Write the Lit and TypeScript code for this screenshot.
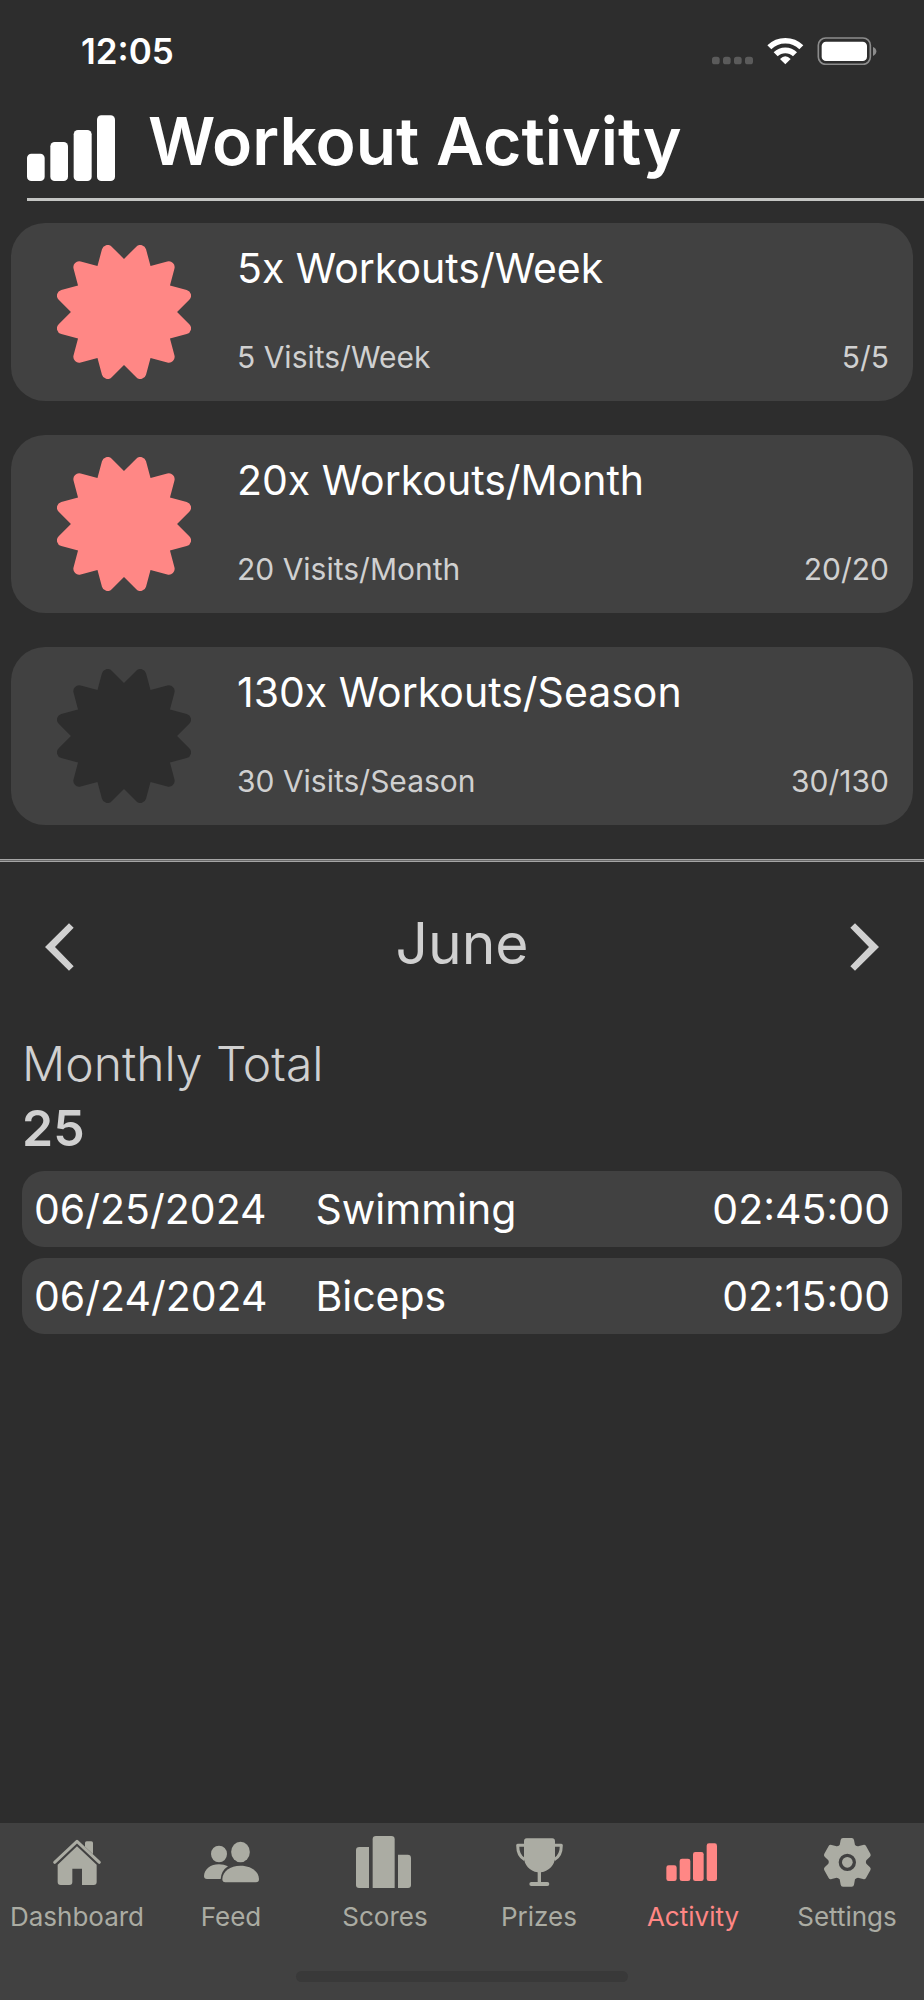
import { LitElement, html, css, svg } from "lit";
import { customElement, property, state } from "lit/decorators.js";
import { classMap } from "lit/directives/class-map.js";

/** Twelve-pointed badge outline with rounded tips, centred on the origin. */
function badgePath(): string {
  const points = 12;
  const inner = 160;
  const outer = 226;
  const corner = 17.5;
  const cut = 30.3;
  const at = (r: number, deg: number): [number, number] => {
    const a = (deg * Math.PI) / 180;
    return [r * Math.sin(a), -r * Math.cos(a)];
  };
  const toward = (from: [number, number], to: [number, number]) => {
    const d = Math.hypot(to[0] - from[0], to[1] - from[1]);
    const x = from[0] + ((to[0] - from[0]) * cut) / d;
    const y = from[1] + ((to[1] - from[1]) * cut) / d;
    return `${x.toFixed(1)} ${y.toFixed(1)}`;
  };
  let d = "";
  for (let i = 0; i < points; i++) {
    const a = at(inner, i * 30);
    const tip = at(outer, i * 30 + 15);
    const b = at(inner, i * 30 + 30);
    d += `${i ? "L" : "M"}${a[0].toFixed(1)} ${a[1].toFixed(1)}`;
    d += `L${toward(tip, a)}A${corner} ${corner} 0 0 1 ${toward(tip, b)}`;
  }
  return d + "Z";
}

const BADGE = badgePath();

@customElement("goal-card")
class GoalCard extends LitElement {
  @property() heading = "";
  @property() detail = "";
  @property({ type: Number }) done = 0;
  @property({ type: Number }) goal = 1;

  static styles = css`
    :host {
      display: flex;
      align-items: center;
      gap: 46px;
      padding: 0 24px 0 46px;
      border-radius: 34px;
      background: #414141;
    }
    .badge {
      flex: none;
      width: 134px;
      height: 134px;
      margin: 22px 0;
      fill: #2d2d2d;
    }
    .earned {
      fill: #ff8785;
    }
    .body {
      flex: 1;
      align-self: stretch;
      display: flex;
      flex-direction: column;
      justify-content: space-between;
      padding: 17px 0 24px;
    }
    h2 {
      margin: 0;
      font-size: 41px;
      line-height: 56px;
      font-weight: 400;
      color: #fff;
    }
    .row {
      display: flex;
      justify-content: space-between;
      font-size: 30px;
      line-height: 40px;
      color: #d0d0d0;
    }
  `;

  render() {
    return html`
      <svg
        class=${classMap({ badge: true, earned: this.done >= this.goal })}
        viewBox="-202 -202 404 404"
        aria-hidden="true"
      >
        <path d=${BADGE} />
      </svg>
      <div class="body">
        <h2>${this.heading}</h2>
        <div class="row">
          <span>${this.detail}</span>
          <span>${this.done}/${this.goal}</span>
        </div>
      </div>
    `;
  }
}

const TABS = [
  {
    label: "Dashboard",
    box: "132 69 198 174",
    icon: svg`
      <path d="M164 157L231 94L298 157" fill="none" stroke="currentColor" stroke-width="9" stroke-linecap="round" stroke-linejoin="round"/>
      <path d="M255 106V99Q255 94 260 94H274Q279 94 279 99V133L255 110Z"/>
      <path d="M231 109L290 164V216Q290 225 281 225H246V176H217V216Q217 225 208 225H182Q173 225 173 216V164Z"/>`,
  },
  {
    label: "Feed",
    box: "594 69 198 174",
    icon: svg`
      <ellipse cx="657" cy="132" rx="24" ry="25"/>
      <ellipse cx="721.500" cy="126" rx="28" ry="31"/>
      <path d="M657 163Q672 163 684 169Q664 182 662 207H621Q612 207 612 198C613 177 632 163 657 163Z"/>
      <path d="M721.500 167C753 167 776 184 777 207Q777 217 768 217H676Q667 217 667 207C668 184 690 167 721.500 167Z"/>`,
  },
  {
    label: "Scores",
    box: "1056 69 198 174",
    icon: svg`
      <path d="M1107 111V234H1077Q1068 234 1068 225V121Q1068 111 1078 111Z"/>
      <path d="M1118 234V88Q1118 78 1128 78H1174Q1184 78 1184 88V234Z"/>
      <path d="M1194 134H1223Q1233 134 1233 144V225Q1233 234 1224 234H1194Z"/>`,
  },
  {
    label: "Prizes",
    box: "132 69 198 174",
    icon: svg`
      <path d="M194 85H271Q279 85 279 94V142C279 165 261 184 237 187V216H256Q262 216 262 222Q262 228 256 228H208Q202 228 202 222Q202 216 208 216H227V187C203 184 186 165 186 142V94Q186 85 194 85Z"/>
      <path d="M188 106H167C167 128 174 142 188 149M277 106H298C298 128 291 142 277 149" fill="none" stroke="currentColor" stroke-width="9" stroke-linejoin="round"/>`,
  },
  {
    label: "Activity",
    box: "594 69 198 174",
    icon: svg`
      <rect x="613" y="166" width="31" height="47" rx="7"/>
      <rect x="653" y="146" width="32" height="67" rx="7"/>
      <rect x="693" y="126" width="32" height="87" rx="7"/>
      <rect x="734" y="100" width="31" height="113" rx="7"/>`,
  },
  {
    label: "Settings",
    box: "1056 69 198 174",
    icon: svg`
      <path fill-rule="evenodd" d="M1143 84H1169Q1175 84 1176 90L1179 105Q1185 110 1191 108L1203 105Q1209 103 1212 108L1225 131Q1228 136 1224 140L1213 151Q1210 156 1213 161L1224 172Q1228 176 1225 181L1212 204Q1209 209 1203 207L1191 204Q1185 202 1179 208L1176 224Q1175 230 1169 230H1143Q1137 230 1136 224L1133 208Q1127 202 1121 204L1109 207Q1103 209 1100 204L1087 181Q1084 176 1088 172L1099 161Q1102 156 1099 151L1088 140Q1084 136 1087 131L1100 108Q1103 103 1109 105L1121 108Q1127 110 1133 105L1136 90Q1137 84 1143 84ZM1156 131A26 26 0 1 0 1156 183A26 26 0 1 0 1156 131Z"/>
      <circle cx="1156" cy="157" r="16"/>`,
  },
];

@customElement("tab-bar")
class TabBar extends LitElement {
  @property() active = "Activity";

  static styles = css`
    :host {
      display: block;
      background: #414141;
    }
    nav {
      display: grid;
      grid-template-columns: repeat(6, minmax(0, 1fr));
      padding-top: 10px;
    }
    a {
      display: flex;
      flex-direction: column;
      align-items: center;
      gap: 8px;
      color: #abaca3;
      text-decoration: none;
      font-size: 26px;
      line-height: 36px;
    }
    .active {
      color: #ff8785;
    }
    svg {
      width: 66px;
      height: 58px;
      fill: currentColor;
    }
    .home-indicator {
      width: 36%;
      height: 11px;
      margin: 36px auto 0;
      border-radius: 6px;
      background: #393939;
    }
    .foot {
      padding-bottom: 18px;
    }
  `;

  render() {
    return html`
      <nav aria-label="Main">
        ${TABS.map(
          (tab) => html`
            <a
              href="#${tab.label.toLowerCase()}"
              class=${classMap({ active: tab.label === this.active })}
            >
              <svg viewBox=${tab.box} aria-hidden="true">${tab.icon}</svg>
              <span>${tab.label}</span>
            </a>
          `
        )}
      </nav>
      <div class="foot"><div class="home-indicator"></div></div>
    `;
  }
}

const MONTHS = [
  "January", "February", "March", "April", "May", "June",
  "July", "August", "September", "October", "November", "December",
];

const GOALS = [
  { heading: "5x Workouts/Week", detail: "5 Visits/Week", done: 5, goal: 5 },
  { heading: "20x Workouts/Month", detail: "20 Visits/Month", done: 20, goal: 20 },
  { heading: "130x Workouts/Season", detail: "30 Visits/Season", done: 30, goal: 130 },
];

const LOG = [
  { date: "06/25/2024", name: "Swimming", time: "02:45:00" },
  { date: "06/24/2024", name: "Biceps", time: "02:15:00" },
];

@customElement("app-root")
class AppRoot extends LitElement {
  @state() private month = 5;

  static styles = css`
    :host {
      display: flex;
      flex-direction: column;
      min-height: 100vh;
      background: #2d2d2d;
      color: #d0d0d0;
      font-family: Inter, "Liberation Sans", sans-serif;
    }
    .status {
      display: flex;
      align-items: center;
      justify-content: space-between;
      height: 101px;
      padding: 0 47px 0 81px;
      color: #fff;
      font-size: 35px;
      font-weight: 600;
    }
    .status svg {
      width: 165px;
      height: 28px;
    }
    .title {
      display: flex;
      align-items: flex-end;
      gap: 33px;
      margin-left: 27px;
      padding-bottom: 17px;
      border-bottom: 3px solid #c4c5c3;
      color: #fff;
    }
    .title svg {
      flex: none;
      width: 88px;
      height: 66px;
      fill: #fff;
    }
    h1 {
      margin: 0;
      font-size: 66px;
      line-height: 80px;
      font-weight: 600;
    }
    .goals {
      display: flex;
      flex-direction: column;
      gap: 34px;
      padding: 22px 11px 34px;
    }
    .divider {
      height: 1px;
      margin: 0;
      border: solid #a5a5a5;
      border-width: 1px 0;
      background: #6a6a6a;
    }
    .month {
      display: flex;
      align-items: center;
      justify-content: space-between;
      height: 170px;
      padding: 0 45px;
    }
    .month h2 {
      margin: 0;
      padding-bottom: 6px;
      font-size: 57px;
      line-height: 72px;
      font-weight: 400;
    }
    button {
      display: flex;
      padding: 0;
      border: 0;
      background: none;
      color: inherit;
      cursor: pointer;
    }
    button svg {
      width: 29px;
      height: 48px;
      fill: currentColor;
    }
    .log {
      padding: 0 22px;
    }
    .total {
      margin: 0;
      font-size: 48px;
      line-height: 64px;
      font-weight: 300;
    }
    .count {
      font-size: 50px;
      font-weight: 600;
    }
    table {
      width: 100%;
      border-spacing: 0 11px;
      color: #fff;
      font-size: 41px;
      line-height: 56px;
    }
    td {
      padding: 10px 12px;
      background: #414141;
    }
    .date {
      width: 1px;
      padding-right: 24px;
      border-radius: 22px 0 0 22px;
      white-space: nowrap;
    }
    .name {
      padding-left: 24px;
    }
    .time {
      border-radius: 0 22px 22px 0;
      text-align: right;
    }
    tab-bar {
      margin-top: auto;
    }
  `;

  private shift(step: number) {
    this.month = (this.month + step + 12) % 12;
  }

  render() {
    return html`
      <div class="status">
        <span>12:05</span>
        <svg viewBox="750 108 495 84" aria-hidden="true">
          <g fill="#5b5b5b">
            <rect x="750" y="167" width="23" height="23" rx="8" />
            <rect x="783" y="167" width="23" height="23" rx="8" />
            <rect x="816" y="167" width="23" height="23" rx="8" />
            <rect x="849" y="167" width="24" height="23" rx="8" />
          </g>
          <g fill="none" stroke="#fff">
            <path d="M922 139A68.500 68.500 0 0 1 1018 139" stroke-width="17" />
            <path d="M941 160A41 41 0 0 1 999 160" stroke-width="17" />
          </g>
          <path d="M954 174Q970 158 986 174L970 190Z" fill="#fff" />
          <rect x="1069" y="111" width="156" height="79" rx="22" fill="none" stroke="#8c8c8c" stroke-width="5" />
          <rect x="1079" y="122" width="136" height="58" rx="13" fill="#fff" />
          <path d="M1233 138Q1243 142 1243 151Q1243 160 1233 165Z" fill="#8c8c8c" />
        </svg>
      </div>

      <header class="title">
        <svg viewBox="81 345 264 198" aria-hidden="true">
          <rect x="81" y="461" width="53" height="82" rx="13" />
          <rect x="151" y="426" width="53" height="117" rx="13" />
          <rect x="221" y="390" width="54" height="153" rx="13" />
          <rect x="291" y="346" width="54" height="197" rx="13" />
        </svg>
        <h1>Workout Activity</h1>
      </header>

      <section class="goals" aria-label="Goals">
        ${GOALS.map(
          (g) => html`
            <goal-card
              .heading=${g.heading}
              .detail=${g.detail}
              .done=${g.done}
              .goal=${g.goal}
            ></goal-card>
          `
        )}
      </section>

      <hr class="divider" />

      <div class="month">
        <button aria-label="Previous month" @click=${() => this.shift(-1)}>
          <svg viewBox="0 0 87 144"><path d="M72 1L86 14L30 72L86 130L72 143L0 72Z" /></svg>
        </button>
        <h2>${MONTHS[this.month]}</h2>
        <button aria-label="Next month" @click=${() => this.shift(1)}>
          <svg viewBox="0 0 87 144"><path d="M15 1L1 14L57 72L1 130L15 143L87 72Z" /></svg>
        </button>
      </div>

      <section class="log" aria-label="Workout log">
        <p class="total">Monthly Total</p>
        <p class="total count">25</p>
        <table>
          <tbody>
            ${LOG.map(
              (w) => html`
                <tr>
                  <td class="date">${w.date}</td>
                  <td class="name">${w.name}</td>
                  <td class="time">${w.time}</td>
                </tr>
              `
            )}
          </tbody>
        </table>
      </section>

      <tab-bar active="Activity"></tab-bar>
    `;
  }
}
